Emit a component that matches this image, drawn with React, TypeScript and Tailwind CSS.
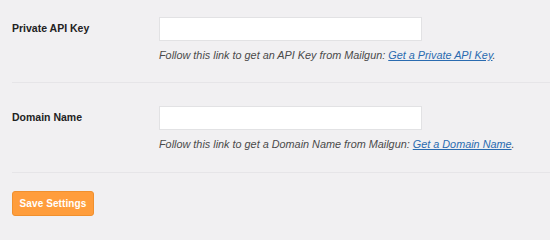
export default function App() {
  const rows = [
    {
      label: 'Private API Key',
      help: 'Follow this link to get an API Key from Mailgun: ',
      link: 'Get a Private API Key',
      pt: 'pt-[17px]',
      pb: 'pb-[19px]',
    },
    {
      label: 'Domain Name',
      help: 'Follow this link to get a Domain Name from Mailgun: ',
      link: 'Get a Domain Name',
      pt: 'pt-[23px]',
      pb: 'pb-[20px]',
    },
  ];

  return (
    <div
      className="w-[550px] h-[240px] bg-[#f1f0f2] pl-3 text-[11px] text-[#333]"
      style={{ fontFamily: '"Liberation Sans", Arial, sans-serif' }}
    >
      {rows.map((r) => (
        <div key={r.label} className={`flex border-b border-[#e6e5e8] ${r.pt} ${r.pb}`}>
          <div className="w-[147px] shrink-0 h-6 flex items-center font-bold text-[10.5px] text-[#222]">{r.label}</div>
          <div>
            <input className="block w-[263px] h-6 bg-white border border-[#e2e2e4] outline-none" />
            <p className="mt-[6px] leading-4 italic text-[10.85px] text-[#4a4a4a]">
              {r.help}
              <a href="#" className="text-[#2a6bb0] underline">
                {r.link}
              </a>
              .
            </p>
          </div>
        </div>
      ))}
      <button className="mt-[18px] w-[82px] h-[25px] rounded-[3px] bg-[#ff9d3c] border border-[#f0902e] text-white font-bold text-[10px] tracking-[0.1px]">
        Save Settings
      </button>
    </div>
  );
}
